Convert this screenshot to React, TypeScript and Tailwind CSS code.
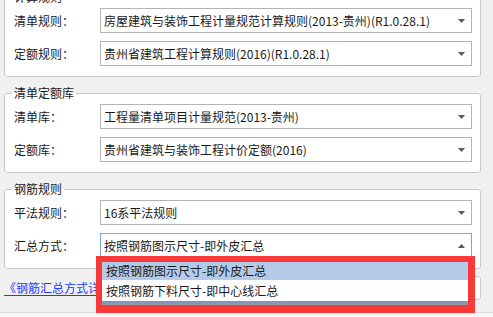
import React from 'react';

type Row = { label: string; value: string; open?: boolean };

const groups: { title: string; rows: Row[] }[] = [
  {
    title: '计算规则',
    rows: [
      { label: '清单规则：', value: '房屋建筑与装饰工程计量规范计算规则(2013-贵州)(R1.0.28.1)' },
      { label: '定额规则：', value: '贵州省建筑工程计算规则(2016)(R1.0.28.1)' },
    ],
  },
  {
    title: '清单定额库',
    rows: [
      { label: '清单库：', value: '工程量清单项目计量规范(2013-贵州)' },
      { label: '定额库：', value: '贵州省建筑与装饰工程计价定额(2016)' },
    ],
  },
  {
    title: '钢筋规则',
    rows: [
      { label: '平法规则：', value: '16系平法规则' },
      { label: '汇总方式：', value: '按照钢筋图示尺寸-即外皮汇总', open: true },
    ],
  },
];

const Arrow = ({ up }: { up?: boolean }) => (
  <svg width="7" height="4" viewBox="0 0 7 4" className="shrink-0">
    <path d={up ? 'M0 4h7L3.5 0z' : 'M0 0h7L3.5 4z'} fill="#5a5a5a" />
  </svg>
);

export default function App() {
  return (
    <div className="relative w-[493px] h-[317px] overflow-hidden bg-[#f0f0f0] flex flex-col font-['Noto_Sans_CJK_SC','Microsoft_YaHei',sans-serif] text-[12px] leading-[16px] text-[#1a1a1a]">
      <div className="flex flex-col pl-[4px] pr-[12px]">
        {groups.map((g, gi) => (
          <fieldset
            key={g.title}
            className={
              'border border-[#c8c8c8] rounded-[3px] bg-white pl-[9px] pr-[8px] pt-[3px] pb-[10px] flex flex-col gap-[8px] ' +
              (gi === 0 ? '-mt-[11px]' : 'mt-[8px]')
            }
          >
            <legend className="px-[2px] -ml-[2px] leading-[16px]">{g.title}</legend>
            {g.rows.map((r) => (
              <div key={r.label} className="flex items-center h-[25px]">
                <span className="w-[86px] shrink-0">{r.label}</span>
                <div
                  className={
                    'flex-1 h-[25px] flex items-center justify-between bg-white border pl-[3px] pr-[6px] ' +
                    (r.open ? 'border-[#7aa7dc]' : 'border-[#b4b4b4]')
                  }
                >
                  <span className="whitespace-nowrap">{r.value}</span>
                  <Arrow up={r.open} />
                </div>
              </div>
            ))}
          </fieldset>
        ))}

        <div className="mt-[7px] h-[24px] flex items-center justify-between">
          <a className="text-[#1a3cff] underline underline-offset-2 cursor-pointer whitespace-nowrap">《钢筋汇总方式详细说明》</a>
          <button className="w-[80px] h-[24px] border border-[#c8c8c8] rounded-[3px] bg-[#fdfdfd]">确定</button>
        </div>
      </div>

      <div className="mt-[12px] flex-1 border-t border-[#dcdcdc] bg-[#f7f7f7]" />

      {/* open dropdown, marked with a red box */}
      <div className="absolute left-[96px] top-[256px] w-[379px] h-[57px] border-[6px] border-r-[7px] border-b-[8px] border-[#f93838] flex flex-col">
        <div className="h-[18px] shrink-0 bg-[#b3cbe9] pl-[4px] flex items-center whitespace-nowrap">按照钢筋图示尺寸-即外皮汇总</div>
        <div className="h-[21px] shrink-0 bg-white pl-[4px] flex items-center whitespace-nowrap">按照钢筋下料尺寸-即中心线汇总</div>
        <div className="flex-1 bg-gradient-to-b from-[#6f95d0] to-[#9a9a9a]" />
      </div>
    </div>
  );
}
